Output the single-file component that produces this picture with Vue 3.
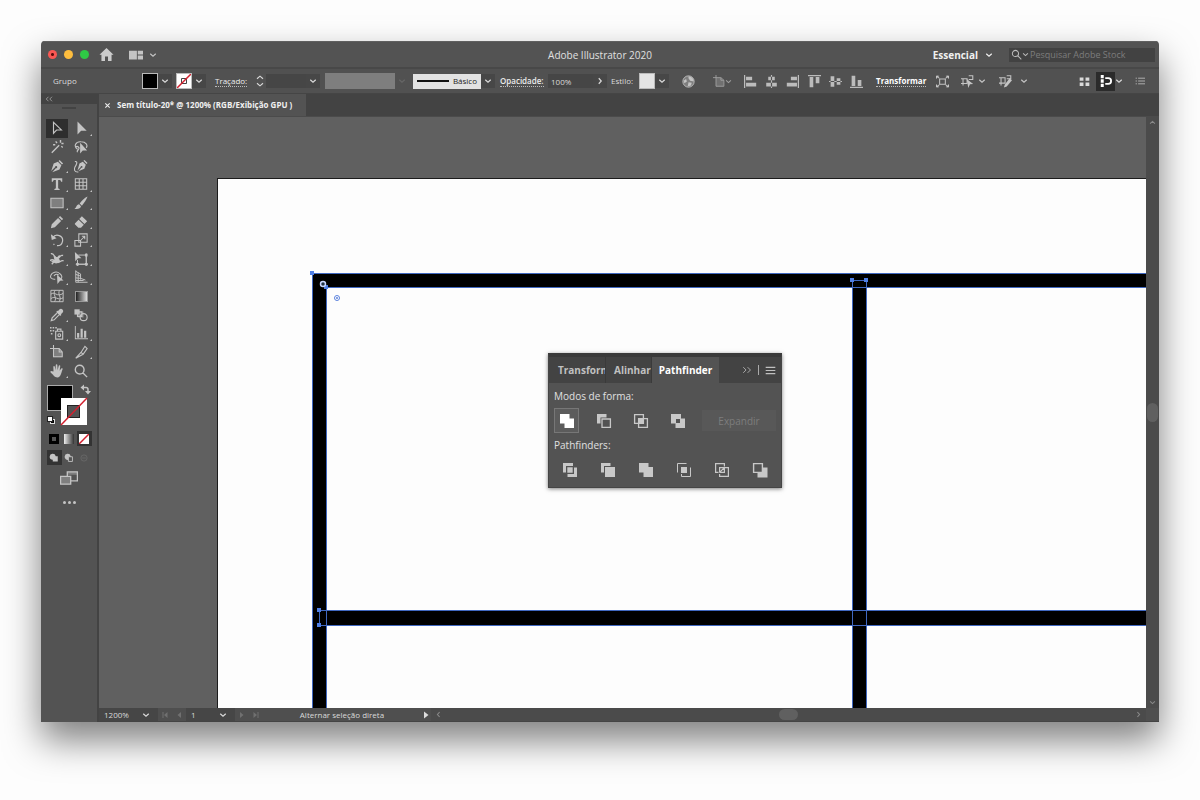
<script setup>
import { h, ref } from 'vue'

// 16x16 glyphs: f = filled path, s = stroked path, d = dimmed filled path
const glyphs = {
  home: { f: 'M8 1L0.5 8.2H2.6V15H6.4V10H9.6V15H13.4V8.2H15.5Z' },
  layout: { f: 'M0 3H9V13H0ZM10 3H16V7.5H10ZM10 8.5H16V13H10Z' },
  chevron: { s: 'M2.5 5.5L8 10.5L13.5 5.5', w: 2.4 },
  right: { s: 'M5.5 2.5L10.5 8L5.5 13.5', w: 2.4 },
  left: { s: 'M10.5 2.5L5.5 8L10.5 13.5', w: 2.4 },
  up: { s: 'M2.5 10.5L8 5.5L13.5 10.5', w: 2.4 },
  search: { s: 'M2 6.5A4.5 4.5 0 1 0 11 6.5A4.5 4.5 0 1 0 2 6.5M10 10L15 15', w: 1.5 },
  stepper: { s: 'M4 5L8 1.5L12 5M4 11L8 14.5L12 11', w: 1.5 },
  globe: { s: 'M1 8A7 7 0 1 0 15 8A7 7 0 1 0 1 8', d: 'M1 8A7 7 0 1 0 15 8A7 7 0 1 0 1 8', f: 'M8 1.5A6.5 6.5 0 0 1 14.5 8L10 7L8 4ZM2 7L5 5L6 8L3 10ZM8 9L12 9.5L11 13L7 14Z', w: 1 },
  artboard: { s: 'M4 0V15H14.5V7L10.5 3.5H0M10.5 3.5V7H14.5', d: 'M4 4H10L14 8V15H4Z', w: 1.2 },
  alignLeft: { f: 'M0 0H1.5V16H0ZM2.5 2H10V6.5H2.5ZM2.5 9.5H15V14H2.5Z' },
  alignCenter: { f: 'M7.3 0H8.7V16H7.3ZM4 2H12V6.5H4ZM1.5 9.5H14.5V14H1.5Z' },
  alignRight: { f: 'M14.5 0H16V16H14.5ZM6 2H13.5V6.5H6ZM1 9.5H13.5V14H1Z' },
  alignTop: { f: 'M0 0H16V1.5H0ZM2 2.5H6.5V15H2ZM9.5 2.5H14V10H9.5Z' },
  alignMiddle: { f: 'M0 7.3H16V8.7H0ZM2 1.5H6.5V14.5H2ZM9.5 4H14V12H9.5Z' },
  alignBottom: { f: 'M0 14.5H16V16H0ZM2 1H6.5V13.5H2ZM9.5 6H14V13.5H9.5Z' },
  isolate: { s: 'M4.5 5H11.5V11.5H4.5ZM1 1L4 4M15 1L12 4M1 15L4 12M15 15L12 12', f: 'M0 1H4L0 5ZM16 1H12L16 5ZM0 15H4L0 11ZM16 15H12L16 11Z', w: 1.3 },
  selectSimilar: { s: 'M2.500 4.5H7.5V10.5H2.500ZM9.5 1H14.5V5.5H9.5M0 4.5H2.5M0 10.5H2.5M2.5 13V10.5', f: 'M7 5L15 11L11 11.5L9 16Z', w: 1.3 },
  editSimilar: { s: 'M2.500 3.5H7.5V10H2.500ZM9.5 1H14.5V4.5H9.5M0 3.5H2.5M0 10H2.5M2.5 13V10', f: 'M13 4L16 6.500L9.500 14L6 15.5L7 12Z', w: 1.3 },
  gridDots: { f: 'M1 2H6.5V7H1ZM9.5 2H15V7H9.5ZM1 9.5H6.5V14.5H1ZM9.5 9.5H15V14.5H9.5Z' },
  magnet: { f: 'M1 0H5V4.3H1ZM1 5.6H5V10.3H1ZM1 11.6H5V16H1Z', s: 'M7 4.2H11A3.8 3.8 0 0 1 11 11.8H7', w: 2.4 },
  list: { s: 'M5 3.5H16M5 8H16M5 12.5H16M1 3.5H3M1 8H3M1 12.5H3', w: 1.4 },
  menu: { s: 'M1 3.5H15M1 8H15M1 12.5H15', w: 1.6 },
  doubleRight: { s: 'M2 3.5L6.5 8L2 12.5M9 3.5L13.5 8L9 12.5', w: 1.3 },
  doubleLeft: { s: 'M7 3.5L2.5 8L7 12.5M14 3.5L9.5 8L14 12.5', w: 1.6 },
  close: { s: 'M3 3L13 13M13 3L3 13', w: 2.4 },
  first: { f: 'M3 2H5V14H3ZM13 2V14L6 8Z' },
  prev: { f: 'M12 2V14L5 8Z' },
  next: { f: 'M4 2V14L11 8Z' },
  last: { f: 'M11 2H13V14H11ZM3 2V14L10 8Z' },
  play: { f: 'M4 1V15L13 8Z' },
  // tools
  selection: { s: 'M4 1.5V14L7.5 10.3L13 10.2Z', w: 1.3 },
  direct: { f: 'M4 0.5V15.5L8.2 11.2L14.5 11Z' },
  wand: { s: 'M2 14.5L10.5 6M12 0V3M15.5 4H13M6.5 1.5L8 3.5M14.5 8.5L13 7M3.5 5.5H6', w: 1.6 },
  lasso: { s: 'M4 10.5C-1 7 2 1.5 8 2C14 2 16 6 14 9M2 8C4 6 7 9 5 11C4 12.5 3 12 4 14', f: 'M7 3V15.5L10 12L15 12Z', w: 1.3 },
  pen: { f: 'M11 1L15 5L13.6 6.2L9.8 2.4ZM9 3L13 7L10.8 12L2.5 15L6.7 10.5A1.3 1.3 0 1 0 5.7 9.5L1.4 13.8L4.2 5.2Z' },
  curvature: { f: 'M12 1L15.5 4.5L14.3 5.6L10.8 2.1ZM10 3L13.5 6.5L11.8 11.2L5 14L8.5 10A1 1 0 1 0 7.7 9.2L4 13L6.2 5Z', s: 'M1 3C5 2 2.5 7 1.2 9C-0.2 12 0.5 15.5 5 14.8', w: 1.3 },
  type: { f: 'M2 1.5H14V5.5H12.6C12.5 4 12 3.3 10.5 3.3H9.3V12.3C9.3 13.3 9.7 13.5 11 13.6V14.8H5V13.6C6.3 13.5 6.7 13.3 6.7 12.3V3.3H5.5C4 3.3 3.5 4 3.4 5.5H2Z' },
  table: { s: 'M1.5 2H14.5V14H1.5ZM1.5 6H14.5M1.5 10H14.5M6 2V14M10.3 2V14', w: 1.2 },
  rect: { s: 'M1 2.5H15V13.5H1Z', d: 'M1 2.5H15V13.5H1Z', w: 1.2 },
  brush: { f: 'M15.5 0.5C12 2 8 6 6.5 8.5L9 11C11.5 8 14.5 4 15.5 0.5ZM5.8 9.5L8 11.7C7.5 14.5 4 15.5 0.5 14.5C3 13.5 2.5 10 5.8 9.5Z' },
  pencil: { f: 'M11.5 1L15 4.5L13.5 6L10 2.5ZM9.2 3.3L12.7 6.8L5.5 14L1 15L2 10.5Z' },
  eraser: { f: 'M9 1.5L15 7L12 10.3L6 4.6ZM5.2 5.5L11.2 11.2L8 14.5H5L1 10.5V9.8Z' },
  rotate: { s: 'M3.2 5.5A6 6 0 1 1 8 14.5M4 12.5L5 13.4', f: 'M1 1.5L2 8L7.5 6Z', w: 1.4 },
  scale: { s: 'M5.5 1H15V10.5H5.5ZM1 8.5H7.5V15H1ZM8 8L12 4M9 3.8H12.3V7', w: 1.2 },
  width: { s: 'M1 2C5 1 4 6 8 7C12 8 10 3 15 4M0 10C4 6 5 12 9 12C12 12 12 9 15.5 10M2 14L11 4', f: 'M4 4L10 7L12 11L7 13L1 11L5 9Z', w: 1.5 },
  freeTransform: { s: 'M5 3.5H14V14H4V9M2 14H16M14 1.5V16M4 12V16', f: 'M1 0L8.5 7L4.5 7.2L1.5 10.5ZM12.5 2H15.5V5H12.5ZM12.5 12.5H15.5V15.5H12.5ZM2.5 12.5H5.5V15.5H2.5Z', w: 1.1 },
  shapeBuilder: { s: 'M6 10.5C1 11 0 8 1 6C2 2.5 8 1 11 4C14 6 14 9 12.5 10M4.5 7C6 4 9 4.5 10 6', f: 'M8 5.5L15.5 12L11.5 12.3L8.5 16Z', w: 1.2 },
  perspective: { s: 'M2 0.5V14H15.5M2 1.5L7.5 4.5V11M2 5L7.5 7M2 9L7.5 9.5L13 11.5M4.8 3V14M2 12H11', w: 1.1 },
  mesh: { s: 'M1 1.5H15V14.5H1ZM1 6C5 2 8 10 15 5M1 11C6 7 9 14 15 10M6 1.5C2 6 9 10 5 14.5M11 1.5C8 6 14 9 10.5 14.5', w: 1.1 },
  eyedropper: { f: 'M11 1.5C13 -0.5 16.5 2.8 14.5 5L12.5 7L13 8L11.5 9L7 4.5L8.3 3.2L9.2 3.5Z', s: 'M7.8 6L2.5 11.3L1.5 14.5L4.8 13.5L10 8.2', w: 1.4 },
  blend: { f: 'M0.5 1.5H6.5V7.5H0.5Z', d: 'M4 4H11V11H4Z', s: 'M4 4.5H9V9.5H4ZM7 10.5A4 4 0 1 0 15 10.5A4 4 0 1 0 7 10.5', w: 1.3 },
  sprayer: { s: 'M6.5 6H14.5V15H6.5ZM8.5 6V3.5H12.5V6M9 10.5A1.6 1.6 0 1 0 12.2 10.5A1.6 1.6 0 1 0 9 10.5', f: 'M0 1H1.8V2.8H0ZM3 1H4.8V2.8H3ZM6 1H7.8V2.8H6ZM0 4.5H1.8V6.3H0ZM3 4.5H4.8V6.3H3ZM1 8H2.8V9.8H1Z', w: 1.3 },
  graph: { f: 'M1 0H2V14H16V15H1ZM3.5 8H6V13.5H3.5ZM7.5 3H10V13.5H7.5ZM11.5 5.5H14V13.5H11.5Z' },
  artboardTool: { s: 'M4 0V13.5H14V8L10.5 4H0M10.5 4V8H14', d: 'M4 4H10L14 8V14H4Z', w: 1.2 },
  slice: { s: 'M8 8.5L12.5 1.5L15 4L10.5 10.5ZM8 8.5L2 15L10.5 10.5', w: 1.3 },
  hand: { f: 'M4 8.5L3.8 3A0.9 0.9 0 0 1 5.5 2.8L6.3 7L6.6 1.2A0.9 0.9 0 0 1 8.4 1.2L8.7 7L10 2A0.9 0.9 0 0 1 11.7 2.5L11 7.8L12.8 5.2A0.9 0.9 0 0 1 14.3 6.2C13 9 12.7 15 8.5 15.5C5 15.5 4 12.5 0.8 9.8A1 1 0 0 1 2.2 8.2Z' },
  zoom: { s: 'M1.5 6.5A5 5 0 1 0 11.5 6.5A5 5 0 1 0 1.5 6.5M10 10L15 15', w: 1.6 },
  drawNormal: { f: 'M1 6A5 5 0 0 1 10.8 5H14V13.5H6V10.9A5 5 0 0 1 1 6Z' },
  drawBehind: { f: 'M1 6A5 5 0 0 1 10.8 5H11.5V6H7V10.9A5 5 0 0 1 1 6Z', s: 'M7 6H13.5V13.5H7Z', w: 1.4 },
  drawInside: { s: 'M3 8A5 5 0 1 0 13 8A5 5 0 1 0 3 8', d: 'M5 6H11V10H5Z', w: 1.2 },
  screen: { s: 'M6.500 7V2.500H15.500V10.500H10M0.500 6.500H9.500V13.500H0.500Z', d: 'M6.500 2.500H15.500V5H6.500ZM0.500 6.500H9.500V13.500H0.500Z', w: 1.2 },
  // shape operations
  unite: { f: 'M1 1H10.5V5.5H15V15H5.5V10.5H1Z' },
  minusFront: { f: 'M1 1H10.5V4.500H4.5V10.5H1Z', s: 'M6 6H14.4V14.4H6Z', w: 1.3 },
  intersect: { s: 'M1.6 1.6H10.4V10.4H1.6ZM5.6 5.6H14.4V14.4H5.6Z', f: 'M5.5 5.5H10.5V10.5H5.5Z', w: 1.3 },
  exclude: { f: 'M1 1H11V5.5H15V15H5.5V10.5H1ZM6 6V10H10V6Z' },
  divide: { f: 'M1 1H11V4H4V10.5H1ZM15 5.5V15H5.5V12H12V5.5ZM5.3 5.3H10.7V10.7H5.3Z' },
  trim: { f: 'M1 1H10.5V4H4V10.5H1ZM5 5H15V15H5Z' },
  merge: { f: 'M1 1H10.5V5H15V15H5.5V10.5H1Z' },
  crop: { s: 'M1.5 10.5V1.5H10.5M14.5 5.5V14.5H5.5V12', f: 'M5 5H11V11H5Z', w: 1 },
  outline: { s: 'M4.500 10.400H1.600V1.600H10.400V4.500M5.600 10.400V5.600H14.400V14.400H5.600V12M5.600 10.400H10.400V5.600M5.600 10.400L10.400 5.600', w: 1.2 },
  minusBack: { s: 'M1.6 1.6H10.4V10.4H1.6Z', f: 'M11 5.5H15.500V15.500H5.5V11H11Z', w: 1.4 },
}

const Icon = (p) => {
  const g = glyphs[p.name]
  const size = p.size || 13
  return h('svg', { class: 'icon', viewBox: '0 0 16 16', width: size, height: size, 'aria-hidden': true }, [
    g.d && h('path', { d: g.d, fill: 'currentColor', opacity: 0.4 }),
    g.f && h('path', { d: g.f, fill: 'currentColor', 'fill-rule': 'evenodd' }),
    g.s && h('path', { d: g.s, fill: 'none', stroke: 'currentColor', 'stroke-width': g.w }),
  ])
}
Icon.props = ['name', 'size']

const tools = [
  ['selection', 'Seleção'], ['direct', 'Seleção direta', 1],
  ['wand', 'Varinha mágica'], ['lasso', 'Laço'],
  ['pen', 'Caneta', 1], ['curvature', 'Curvatura'],
  ['type', 'Texto', 1], ['table', 'Tabela', 1],
  ['rect', 'Retângulo', 1], ['brush', 'Pincel', 1],
  ['pencil', 'Lápis', 1], ['eraser', 'Borracha', 1],
  ['rotate', 'Girar', 1], ['scale', 'Escala', 1],
  ['width', 'Largura', 1], ['freeTransform', 'Transformação livre', 1],
  ['shapeBuilder', 'Construtor de formas', 1], ['perspective', 'Perspectiva', 1],
  ['mesh', 'Malha'], ['gradient', 'Gradiente'],
  ['eyedropper', 'Conta-gotas', 1], ['blend', 'Mesclagem'],
  ['sprayer', 'Pulverizador', 1], ['graph', 'Gráfico', 1],
  ['artboardTool', 'Prancheta'], ['slice', 'Fatia', 1],
  ['hand', 'Mão', 1], ['zoom', 'Zoom'],
].map(([id, label, more]) => ({ id, label, more }))

const tool = ref('selection')
const mode = ref('unite')
const alignH = [['alignLeft', 'Alinhar à esquerda'], ['alignCenter', 'Centralizar'], ['alignRight', 'Alinhar à direita']]
const alignV = [['alignTop', 'Alinhar ao topo'], ['alignMiddle', 'Alinhar ao meio'], ['alignBottom', 'Alinhar à base']]
const modes = [['unite', 'Unir'], ['minusFront', 'Menos frente'], ['intersect', 'Intersecção'], ['exclude', 'Excluir']]
const finders = [['divide', 'Dividir'], ['trim', 'Aparar'], ['merge', 'Mesclar'], ['crop', 'Cortar'], ['outline', 'Contorno'], ['minusBack', 'Menos fundo']]
</script>

<template>
  <div class="desktop">
    <div class="window">
      <header class="titlebar">
        <div class="side">
          <div class="lights">
            <button class="light red" aria-label="Fechar"></button>
            <button class="light yellow" aria-label="Minimizar"></button>
            <button class="light green" aria-label="Ampliar"></button>
          </div>
          <button class="home" aria-label="Início"><Icon name="home" :size="15" /></button>
          <button class="arrange" aria-label="Organizar documentos"><Icon name="layout" :size="14" /><Icon name="chevron" :size="8" /></button>
        </div>
        <h1>Adobe Illustrator 2020</h1>
        <div class="side end">
          <button class="workspace">Essencial <Icon name="chevron" :size="8" /></button>
          <label class="search">
            <Icon name="search" :size="11" /><Icon name="chevron" :size="7" />
            <input type="text" placeholder="Pesquisar Adobe Stock" aria-label="Pesquisar Adobe Stock">
          </label>
        </div>
      </header>

      <div class="control">
        <span class="kind">Grupo</span>
        <div class="cell">
          <button class="swatch black" aria-label="Preenchimento"></button>
          <button class="drop" aria-label="Opções de preenchimento"><Icon name="chevron" :size="8" /></button>
        </div>
        <div class="cell">
          <button class="swatch none" aria-label="Traçado">
            <svg viewBox="0 0 14 14" width="14" height="14"><path d="M4.500 4.500H9.500V9.500H4.500Z" fill="none" stroke="#444" /><path d="M0 14L14 0" stroke="#d3202f" stroke-width="1.500" /></svg>
          </button>
          <button class="drop" aria-label="Opções de traçado"><Icon name="chevron" :size="8" /></button>
        </div>
        <label class="link" for="weight"><span>Traçado:</span></label>
        <div class="cell">
          <button class="step" aria-label="Alterar espessura"><Icon name="stepper" :size="12" /></button>
          <input id="weight" class="field weight" type="text">
          <button class="drop" aria-label="Espessuras"><Icon name="chevron" :size="8" /></button>
        </div>
        <div class="cell">
          <button class="profile" aria-label="Perfil de largura variável" disabled></button>
          <button class="drop faint" aria-label="Perfis" disabled><Icon name="chevron" :size="8" /></button>
        </div>
        <div class="cell">
          <button class="basic"><i></i>Básico</button>
          <button class="drop" aria-label="Pincéis"><Icon name="chevron" :size="8" /></button>
        </div>
        <label class="link strong" for="opacity"><span>Opacidade:</span></label>
        <div class="cell">
          <input id="opacity" class="field opacity" type="text" value="100%">
          <button class="drop" aria-label="Mais opacidade"><Icon name="right" :size="8" /></button>
        </div>
        <span>Estilo:</span>
        <div class="cell">
          <button class="swatch style" aria-label="Estilo"></button>
          <button class="drop" aria-label="Estilos"><Icon name="chevron" :size="8" /></button>
        </div>
        <button class="plain" aria-label="Recolorir arte"><Icon name="globe" /></button>
        <button class="plain dim" aria-label="Alinhar à prancheta"><Icon name="artboard" :size="12" /><Icon name="chevron" :size="7" /></button>
        <div class="aligns">
          <button v-for="[id, label] in alignH" :key="id" :aria-label="label"><Icon :name="id" /></button>
        </div>
        <div class="aligns">
          <button v-for="[id, label] in alignV" :key="id" :aria-label="label"><Icon :name="id" /></button>
        </div>
        <a class="link bold" href="#"><span>Transformar</span></a>
        <button class="plain" aria-label="Isolar objeto"><Icon name="isolate" /></button>
        <button class="plain" aria-label="Selecionar semelhantes"><Icon name="selectSimilar" /><Icon name="chevron" :size="8" /></button>
        <button class="plain wide" aria-label="Editar semelhantes"><Icon name="editSimilar" /><Icon name="chevron" :size="8" /></button>
        <div class="snaps">
          <button aria-label="Ajustar à grade"><Icon name="gridDots" :size="11" /></button>
          <button class="on" aria-label="Ajustar ao ponto"><Icon name="magnet" :size="12" /></button>
          <button aria-label="Opções de ajuste"><Icon name="chevron" :size="8" /></button>
          <button class="last" aria-label="Menu"><Icon name="list" :size="10" /></button>
        </div>
      </div>

      <div class="main">
        <aside class="tools">
          <button class="collapse" aria-label="Recolher"><Icon name="doubleLeft" :size="8" /></button>
          <i class="grip"></i>
          <div class="toolgrid">
            <button v-for="t in tools" :key="t.id" :class="{ on: tool === t.id, more: t.more }" :aria-label="t.label" @click="tool = t.id">
              <i v-if="t.id === 'gradient'" class="gradient"></i>
              <Icon v-else :name="t.id" :size="14" />
            </button>
          </div>
          <svg class="colors" viewBox="0 0 48 44" width="48" height="44" role="img" aria-label="Preenchimento e traçado">
            <rect x="2.500" y="2.500" width="25" height="25" fill="#000" stroke="#aaa" />
            <rect x="16" y="15" width="26" height="27" fill="#fff" />
            <rect x="22.500" y="22.500" width="12" height="12" fill="#535353" stroke="#222" />
            <path d="M16 42L42 15" stroke="#d3202f" stroke-width="1.500" />
            <rect x="5.500" y="36.500" width="4" height="4" fill="#000" stroke="#ddd" />
            <rect x="2.500" y="33.500" width="5" height="5" fill="#fff" stroke="#222" />
            <path d="M38 4.500H41C42.500 4.500 43 5 43 6.500V9" fill="none" stroke="#c4c4c4" stroke-width="1.500" />
            <path d="M35.500 4.500L39 1.500V7.500ZM43 11.500L40 8H46Z" fill="#c4c4c4" />
          </svg>
          <div class="row">
            <button aria-label="Cor"><i class="solid"></i></button>
            <button aria-label="Gradiente"><i class="fade"></i></button>
            <button class="on" aria-label="Nenhum"><svg viewBox="0 0 10 10" width="10" height="10"><path d="M0 0H10V10H0Z" fill="#fff" /><path d="M0 10L10 0" stroke="#d3202f" stroke-width="1.500" /></svg></button>
          </div>
          <div class="row">
            <button class="on" aria-label="Desenho normal"><Icon name="drawNormal" :size="10" /></button>
            <button aria-label="Desenhar atrás"><Icon name="drawBehind" :size="10" /></button>
            <button class="off" aria-label="Desenhar dentro" disabled><Icon name="drawInside" :size="10" /></button>
          </div>
          <button class="screen" aria-label="Modo de tela"><Icon name="screen" :size="18" /></button>
          <button class="dots" aria-label="Editar barra de ferramentas"><i></i><i></i><i></i></button>
        </aside>

        <section class="document">
          <div class="tabs">
            <div class="tab">
              <button aria-label="Fechar documento"><Icon name="close" :size="7" /></button>
              <span>Sem título-20* @ 1200% (RGB/Exibição GPU )</span>
            </div>
          </div>
          <div class="stage">
            <svg class="art" role="img" aria-label="Prancheta com grade preta">
              <rect x="118.500" y="61.500" width="3000" height="3000" fill="#fdfdfd" stroke="#1c1c1c" />
              <path d="M213 156H3000V170H227V3000H213ZM753 163H767V3000H753ZM220 493H3000V508H220Z" fill="#000" />
              <path d="M3000 156.500H213.500V3000M3000 170.500H227.500V3000M753.500 3000V163.500H767.500V3000M3000 493.500H220.500V508.500H3000M227.500 493V508" fill="none" stroke="#4068c0" />
              <path d="M211 154H215V158H211ZM225 168H229V172H225ZM751 161H755V165H751ZM765 161H769V165H765ZM218 491H222V495H218ZM218 506H222V510H218Z" fill="#4f7fe5" />
              <circle cx="224" cy="167" r="2.500" fill="#234" stroke="#c9d8ff" stroke-width="1.500" />
              <circle cx="238" cy="181" r="2.500" fill="#fff" stroke="#5b82dd" />
              <circle cx="238" cy="181" r="1" fill="#5b82dd" />
            </svg>
            <div class="vscroll">
              <button aria-label="Rolar para cima"><Icon name="up" :size="7" /></button>
              <i></i>
              <button aria-label="Rolar para baixo"><Icon name="chevron" :size="7" /></button>
            </div>

            <section class="panel" aria-label="Pathfinder">
              <div class="paneltabs">
                <button class="cut">Transformar</button>
                <button class="cut second">Alinhar</button>
                <button class="on">Pathfinder</button>
                <span class="panelmenu">
                  <button aria-label="Recolher painel"><Icon name="doubleRight" :size="10" /></button>
                  <i></i>
                  <button aria-label="Menu do painel"><Icon name="menu" :size="11" /></button>
                </span>
              </div>
              <div class="panelbody">
                <h2>Modos de forma:</h2>
                <div class="shapes">
                  <button v-for="[id, label] in modes" :key="id" :class="{ on: mode === id }" :aria-label="label" @click="mode = id"><Icon :name="id" :size="16" /></button>
                  <button class="expand" disabled>Expandir</button>
                </div>
                <h2>Pathfinders:</h2>
                <div class="finders">
                  <button v-for="[id, label] in finders" :key="id" :aria-label="label"><Icon :name="id" :size="16" /></button>
                </div>
              </div>
            </section>
          </div>
          <footer class="status">
            <label class="zoomsel"><select aria-label="Zoom"><option>1200%</option></select><Icon name="chevron" :size="8" /></label>
            <button class="nav" aria-label="Primeira" disabled><Icon name="first" :size="8" /></button>
            <button class="nav" aria-label="Anterior" disabled><Icon name="prev" :size="8" /></button>
            <label class="pagesel"><select aria-label="Prancheta"><option>1</option></select><Icon name="chevron" :size="8" /></label>
            <button class="nav" aria-label="Próxima" disabled><Icon name="next" :size="8" /></button>
            <button class="nav" aria-label="Última" disabled><Icon name="last" :size="8" /></button>
            <span class="hint">Alternar seleção direta</span>
            <button class="play" aria-label="Opções de status"><Icon name="play" :size="8" /></button>
            <div class="hscroll">
              <button aria-label="Rolar para a esquerda"><Icon name="left" :size="7" /></button>
              <i></i>
              <button aria-label="Rolar para a direita"><Icon name="right" :size="7" /></button>
            </div>
          </footer>
        </section>
      </div>
    </div>
  </div>
</template>

<style>
body { background: #fdfdfd; }
</style>

<style scoped>
* { box-sizing: border-box; }
.desktop { display: flex; min-height: 100vh; padding: 41px 41px 78px; font-family: "Open Sans", "Noto Sans", sans-serif; font-size: 8px; line-height: 12px; color: #dadada; }
.window { flex: 1; min-width: 0; display: flex; flex-direction: column; background: #535353; border-radius: 4px 4px 0 0; overflow: hidden; box-shadow: 0 18px 36px rgba(0, 0, 0, .5); }
button, input, select { font: inherit; color: inherit; background: none; border: 0; margin: 0; padding: 0; outline: none; appearance: none; }
button { display: flex; align-items: center; justify-content: center; }
.icon { display: block; flex: none; }

.titlebar { display: grid; grid-template-columns: 1fr auto 1fr; align-items: center; height: 28px; border-bottom: 2px solid #484848; border-top: 1px solid #606060; }
.side { display: flex; align-items: center; padding-left: 7px; }
.end { justify-content: flex-end; padding: 0 4px 0 0; }
.lights { display: flex; gap: 7px; }
.light { width: 9px; height: 9px; border-radius: 50%; }
.red { background: radial-gradient(circle, #5d0d0b 1px, #fb5753 2px); }
.yellow { background: #fdbd3e; }
.green { background: #2fc945; }
.home { margin-left: 10px; color: #ccc; }
.arrange { margin-left: 15px; gap: 6px; color: #c4c4c4; }
h1 { margin: 0; font-size: 10px; font-weight: 400; color: #e0e0e0; }
.workspace { margin-right: 16px; gap: 7px; font-size: 10px; font-weight: 700; color: #f0f0f0; white-space: nowrap; }
.search { display: flex; align-items: center; width: 146px; height: 14px; padding: 0 2px; background: #424242; font-size: 9px; color: #bbb; }
.search input { flex: 1; min-width: 0; padding-left: 1px; }
.search input::placeholder { color: #7d7d7d; opacity: 1; }

.control { display: grid; grid-template-columns: 89px 34px 39px 39px 71px 88px 87px 48px 63px 28px 43px 31px 31px 64px 68px 60px 25px 38px 38px 1fr; align-items: center; height: 25px; padding-left: 12px; background: #515151; border-bottom: 1px solid #454545; }
.cell { display: flex; align-items: center; height: 16px; }
.swatch { width: 16px; height: 16px; border: 1px solid #bbb; }
.black { background: #000; }
.none { background: #fff; }
.style { background: #e4e4e4; }
.drop { width: 14px; height: 14px; background: #474747; }
.faint { background: none; color: #666; }
.link { color: #ececec; text-decoration: none; }
.link span { border-bottom: 1px dotted #bbb; }
.strong { font-weight: 600; }
.bold { font-weight: 700; color: #fff; }
.step { width: 12px; height: 16px; }
.field { height: 14px; background: #464646; }
.weight { width: 40px; }
.opacity { width: 45px; padding-left: 3px; }
.profile { width: 70px; height: 16px; background: #7e7e7e; }
.basic { width: 68px; height: 15px; padding: 0 4px; gap: 4px; background: #e2e2e2; color: #222; justify-content: space-between; }
.basic i { width: 32px; height: 2px; background: #111; }
.plain { justify-content: flex-start; gap: 4px; color: #c4c4c4; }
.wide { gap: 8px; }
.dim { gap: 0; color: #a0a0a0; }
.aligns { display: flex; gap: 8px; color: #bcbcbc; }
.snaps { display: flex; justify-self: end; align-items: center; padding-right: 14px; }
.snaps .on { width: 19px; height: 19px; margin-left: 6px; background: #2b2b2b; color: #fff; }
.snaps .last { margin-left: 12px; color: #bbb; }

.main { flex: 1; min-height: 0; display: flex; }
.tools { flex: none; display: flex; flex-direction: column; align-items: center; width: 58px; border-right: 2px solid #434343; color: #c4c4c4; }
.collapse { align-self: stretch; height: 10px; padding-left: 4px; background: #434343; color: #aaa; justify-content: flex-start; }
.grip { width: 14px; height: 2px; margin: 3px 0 10px; background: #434343; }
.toolgrid { display: grid; grid-template-columns: 24px 24px; grid-template-rows: repeat(14, 1fr); height: 261px; }
.toolgrid button { position: relative; }
.toolgrid .on { margin: 0 1px; background: #2e2e2e; }
.more::after { content: ""; position: absolute; right: 1px; bottom: 2px; border: 1px solid #c4c4c4; border-top-color: transparent; border-left-color: transparent; }
.gradient { width: 13px; height: 11px; border: 1px solid #999; background: linear-gradient(90deg, #222, #ddd); }
.colors { display: block; margin-top: 3px; }
.row { display: flex; margin-top: 4px; }
.row button { width: 15px; height: 15px; }
.row .on { background: #333; }
.solid { width: 10px; height: 10px; border: 3px solid #000; background: #555; }
.fade { width: 10px; height: 10px; background: linear-gradient(90deg, #eee, #333); }
.row .off { color: #6c6c6c; }
.screen { margin-top: 4px; height: 18px; }
.dots { gap: 2px; margin-top: 14px; }
.dots i { width: 3px; height: 3px; border-radius: 50%; background: #c4c4c4; }

.document { flex: 1; min-width: 0; display: flex; flex-direction: column; }
.tabs { display: flex; height: 23px; background: #434343; border-bottom: 1px solid #4b4b4b; }
.tab { display: flex; align-items: center; gap: 6px; padding: 0 14px 0 5px; background: #535353; font-weight: 700; color: #f0f0f0; white-space: nowrap; }
.stage { position: relative; flex: 1; min-height: 0; display: flex; background: #606060; }
.art { flex: 1; min-width: 0; height: 100%; display: block; }
.vscroll { display: flex; flex-direction: column; justify-content: space-between; align-items: center; width: 13px; padding: 2px 0; background: #4b4b4b; color: #8a8a8a; }
.vscroll i { width: 11px; height: 19px; border-radius: 6px; background: #606060; }

.panel { position: absolute; left: 449px; top: 236px; width: 234px; background: #535353; border: 1px solid #454545; border-top: 4px solid #3a3a3a; box-shadow: 0 1px 4px rgba(0, 0, 0, .5); font-size: 10px; line-height: 14px; }
.paneltabs { display: flex; height: 26px; background: #434343; font-weight: 700; color: #c0c0c0; }
.cut { width: 57px; padding-left: 9px; overflow: hidden; justify-content: flex-start; border-right: 1px solid #3a3a3a; }
.second { width: 46px; padding-left: 8px; }
.paneltabs .on { width: 67px; background: #535353; color: #fff; }
.panelmenu { flex: 1; display: flex; align-items: center; justify-content: flex-end; gap: 6px; padding-right: 5px; }
.panelmenu i { width: 1px; height: 10px; background: #aaa; }
.panelbody { padding: 6px 5px 0; }
h2 { margin: 0; font-size: 10px; line-height: 14px; font-weight: 400; color: #e0e0e0; }
.shapes { display: flex; align-items: center; gap: 12px; height: 35px; color: #c8c8c8; }
.shapes button { width: 25px; height: 25px; }
.shapes .on { border: 1px solid #777; background: #5c5c5c; color: #fff; }
.shapes .expand { flex: 1; height: 21px; background: #585858; color: #7d7d7d; }
.finders { display: flex; justify-content: space-between; height: 35px; padding: 0 8px; color: #c8c8c8; }

.status { display: flex; align-items: center; height: 14px; background: #4f4f4f; border-bottom: 1px solid #444; }
.status label { display: flex; align-items: center; height: 13px; padding: 0 8px 0 5px; background: #464646; }
.zoomsel { width: 59px; }
.pagesel { width: 49px; }
.status select { flex: 1; min-width: 0; line-height: 12px; }
.nav { width: 14px; color: #707070; }
.hint { width: 158px; text-align: center; }
.play { width: 10px; color: #ddd; }
.hscroll { flex: 1; display: flex; align-items: center; justify-content: space-between; height: 13px; margin-right: 13px; padding: 0 4px; background: #4b4b4b; color: #8a8a8a; }
.hscroll i { width: 19px; height: 11px; border-radius: 6px; background: #606060; }
</style>
